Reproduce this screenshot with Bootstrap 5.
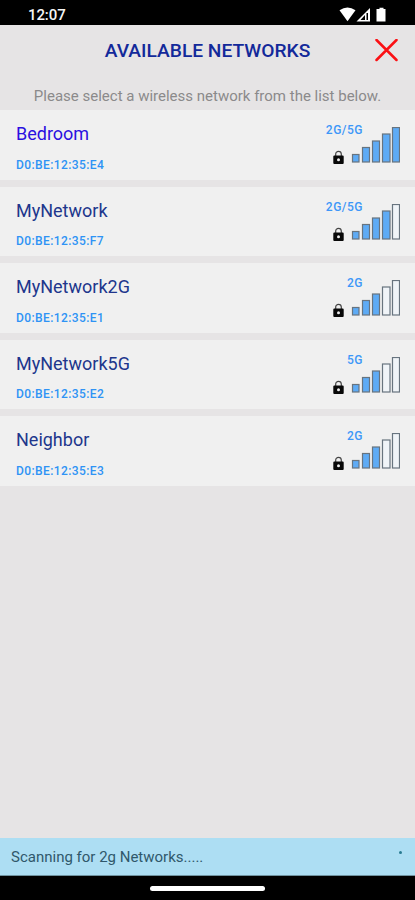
<!DOCTYPE html>
<html lang="en">
<head>
<meta charset="utf-8">
<meta name="viewport" content="width=device-width, initial-scale=1">
<title>Available Networks</title>
<link rel="stylesheet" href="https://cdn.jsdelivr.net/npm/bootstrap@5.3.0/dist/css/bootstrap.min.css">
<style>
body { font-family: Roboto, "Liberation Sans", sans-serif; background: #e6e4e5; }
svg { display: block; }
.status { height: 25px; background: #000; color: #f5f5f5; padding: 4px 28px 0 28px; }
.clock { font-size: 15px; line-height: 22px; font-weight: 500; letter-spacing: -.1px; }
.heading { height: 50px; padding-right: 17px; }
.heading h1 { font-size: 19.2px; line-height: 24px; font-weight: 500; color: #13299a; padding: 1px 0 0 40px; }
.hint { height: 35px; padding-top: 11px; font-size: 15px; line-height: 20px; color: #8b8a8b; }
.networks { gap: 7.1px; }
.network { height: 69.5px; background: #f0f0f0; padding: 0 15px 0 16px; }
.ssid { font-size: 18px; line-height: 22px; padding-top: 13px; color: #20368c; }
.ssid.current { color: #2a10e0; }
.mac { font-size: 12px; line-height: 14px; padding-top: 12.5px; font-weight: 500; color: #2e93f5; letter-spacing: .4px; }
.band { font-size: 12px; line-height: 14px; font-weight: 500; color: #3d97f8; letter-spacing: .5px; margin-right: 37px; }
.signal-box { padding-top: 13px; }
.signal-icons { margin-top: -10px; }
.scan { height: 38px; background: #addef3; color: #30586b; padding: 2px 13px 0 11px; font-size: 15px; border-bottom: 1px solid #6f929f; }
.dot { width: 3px; height: 3px; background: #287a91; margin-bottom: 10px; }
.home-area { height: 24px; background: #000; }
.pill { width: 115px; height: 5px; background: #fff; }
</style>
</head>
<body>
<svg width="0" height="0" class="position-absolute" aria-hidden="true">
  <defs>
    <g id="lock">
      <path d="M2.7 6V3.600a2.800 2.800 0 0 1 5.600 0V6" fill="none" stroke="#444" stroke-width="1.200"/>
      <path d="M1.300 5h8.400a1 1 0 0 1 1 1v6.600a1 1 0 0 1-1 1h-8.400a1 1 0 0 1-1-1v-6.600a1 1 0 0 1 1-1z" fill="#080808"/>
      <circle cx="5.500" cy="9.300" r="1.500" fill="#eee"/>
    </g>
  </defs>
</svg>
<div class="vh-100 d-flex flex-column overflow-hidden">
  <div class="status d-flex justify-content-between">
    <span class="clock">12:07</span>
    <svg width="49" height="18" viewBox="0 0 49 18" fill="#fff">
      <path d="M1.500 6.200Q9.500 1 17.500 6.200L9.500 17.200z"/>
      <path d="M32 4V17.500H18.500z"/>
      <path d="M27 11v5H22.500z" fill="#000"/><path d="M28.500 9h1.500v7h-1.500z" fill="#000"/>
      <path d="M41.500 3.700h4v1.300h2v12.500h-9V5h3z"/>
    </svg>
  </div>
  <header class="heading d-flex align-items-center">
    <h1 class="flex-grow-1 text-center mb-0">AVAILABLE NETWORKS</h1>
    <svg width="23" height="23" viewBox="0 0 23 23"><path d="M1.500 1l20 20M21.500 1l-20 20" stroke="#fb1014" stroke-width="2.500" stroke-linecap="round"/></svg>
  </header>
  <p class="hint text-center mb-0">Please select a wireless network from the list below.</p>
  <main class="networks d-flex flex-column flex-grow-1" id="networks"></main>
  <footer class="scan d-flex justify-content-between align-items-center"><span>Scanning for 2g Networks.....</span><span class="dot rounded-circle"></span></footer>
  <div class="home-area d-flex justify-content-center align-items-center"><div class="pill rounded-pill"></div></div>
</div>
<script>
const networks = [
  ["Bedroom", "D0:BE:12:35:E4", "2G/5G", 5],
  ["MyNetwork", "D0:BE:12:35:F7", "2G/5G", 4],
  ["MyNetwork2G", "D0:BE:12:35:E1", "2G", 3],
  ["MyNetwork5G", "D0:BE:12:35:E2", "5G", 3],
  ["Neighbor", "D0:BE:12:35:E3", "2G", 3]
];
// x, width and height of each signal bar
const bars = [[19.5, 6.5, 7.5], [29.5, 7, 14.5], [39.5, 7, 21], [49.5, 7.5, 28], [59.5, 7, 34.5]];
document.getElementById("networks").innerHTML = networks.map(([name, mac, band, level], i) => `
  <section class="network d-flex justify-content-between">
    <div><div class="ssid${i ? "" : " current"}">${name}</div><div class="mac">${mac}</div></div>
    <div class="signal-box d-flex flex-column align-items-end">
      <div class="band">${band}</div>
      <svg class="signal-icons" width="67" height="38" viewBox="0 0 67 38">
        <use href="#lock" y="23.500"/>
        ${bars.map(([x, w, h], b) => `<rect x="${x}" y="${35 - h}" width="${w}" height="${h}" fill="${b < level ? "#5eabf5" : "#f0f4f8"}" stroke="#68747f" stroke-width="1.200"/>`).join("")}
      </svg>
    </div>
  </section>`).join("");
</script>
<script src="https://cdn.jsdelivr.net/npm/bootstrap@5.3.0/dist/js/bootstrap.bundle.min.js"></script>
</body>
</html>
